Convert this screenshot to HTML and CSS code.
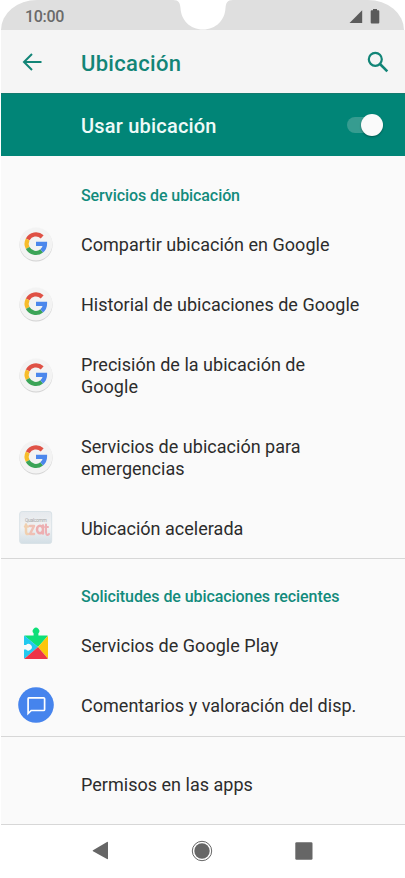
FILE: index.html
```html
<!DOCTYPE html>
<html lang="es">
<head>
<meta charset="utf-8">
<title>Ubicación</title>
<link rel="stylesheet" href="styles.css">
</head>
<body>
<svg width="0" height="0" class="defs">
  <defs>
    <symbol id="google" viewBox="0 0 36 36">
      <circle cx="18" cy="18.900" r="16.500" fill="#d2d2d2"/>
      <circle cx="18" cy="18" r="16.500" fill="#f3f3f3"/>
      <g fill="none" stroke-width="4.200" transform="translate(0 .5)">
        <path d="M24.200 10.400A9.200 9.200 0 0 0 9.700 12.900" stroke="#df5145"/>
        <path d="M9.700 12.900A9.200 9.200 0 0 0 9.700 21.500" stroke="#f7bd2a"/>
        <path d="M9.700 21.500A9.200 9.200 0 0 0 23.700 24.400" stroke="#3ba457"/>
        <path d="M23.700 24.400A9.200 9.200 0 0 0 27 17.300H18" stroke="#4c87ec"/>
      </g>
    </symbol>
  </defs>
</svg>
<div class="phone">
  <header class="status">
    <span class="time">10:00</span>
    <svg class="notch" width="60" height="30" viewBox="0 0 60 30"><path d="M0 0C6 0 7 3 7.500 8C8 20 17 29.500 30 29.500S52 20 52.500 8C53 3 54 0 60 0Z" fill="#fff"/></svg>
    <svg width="32" height="16" viewBox="0 0 32 16" fill="#5b5b5b"><path d="M1.500 15 14.200 2.200V15Z"/><path d="M25 2.300V1h4v1.300h1.300q1 0 1 1V14.500q0 1-1 1h-6.600q-1 0-1-1V3.300q0-1 1-1Z"/></svg>
  </header>
  <div class="appbar">
    <svg width="20" height="18" viewBox="0 0 20 18" fill="none" stroke="#128577" stroke-width="2"><path d="M19.500 9H2M10 1 2 9l8 8"/></svg>
    <h1>Ubicación</h1>
    <svg class="search" width="22" height="22" viewBox="0 0 22 22" fill="none" stroke="#128577"><circle cx="8.300" cy="8.300" r="6.500" stroke-width="2.200"/><path d="M13 13l7.300 7.300" stroke-width="2.600"/></svg>
  </div>
  <div class="switchbar">
    <span>Usar ubicación</span>
    <div class="toggle"><div class="thumb"></div></div>
  </div>
  <main>
    <section class="services">
      <h2>Servicios de ubicación</h2>
      <div class="row"><svg class="icon"><use href="#google"/></svg><p>Compartir ubicación en Google</p></div>
      <div class="row"><svg class="icon"><use href="#google"/></svg><p>Historial de ubicaciones de Google</p></div>
      <div class="row double"><svg class="icon"><use href="#google"/></svg><p>Precisión de la ubicación de<br>Google</p></div>
      <div class="row double"><svg class="icon"><use href="#google"/></svg><p>Servicios de ubicación para<br>emergencias</p></div>
      <div class="row">
        <svg class="icon" viewBox="0 0 36 36">
          <defs><linearGradient id="tile" x2="0" y2="1"><stop offset="0" stop-color="#e5e9ed"/><stop offset=".5" stop-color="#f1f2f3"/><stop offset="1" stop-color="#d2dee5"/></linearGradient></defs>
          <rect x="1.700" y="1.500" width="32" height="32" rx="2.500" fill="url(#tile)" stroke="#d9e2e7"/>
          <text x="7" y="12" class="brand" textLength="22">Qualcomm</text>
          <g fill="none" stroke-width="2.500" stroke-linecap="round" stroke-linejoin="round">
            <path d="M8 14.500v7q0 3 2 2.500M7 16.500h3" stroke="#f0d0b0"/>
            <path d="M12 16h4l-4 8h4" stroke="#efc0b5"/>
            <path d="M25 15.500v8M25 19.500a3 3.700 0 1 0-6 0a3 3.700 0 1 0 6 0" stroke="#edafb1"/>
            <path d="M28 14.500v8q.5 4 3 1.500M27 17h3" stroke="#edafb4" stroke-width="2"/>
          </g>
        </svg>
        <p>Ubicación acelerada</p>
      </div>
    </section>
    <section class="recent">
      <h2>Solicitudes de ubicaciones recientes</h2>
      <div class="row">
        <svg class="icon" viewBox="0 0 36 36">
          <defs><clipPath id="puzzle"><path d="M7 8.500h8.600V6.300a3.300 3.300 0 1 1 4.800 0V8.500H29q1 0 1 1v21.500q0 1-1 1H7q-1 0-1-1v-8.600h2a3.300 3.300 0 1 0 0-4.400H6V9.500q0-1 1-1Z"/></clipPath></defs>
          <g clip-path="url(#puzzle)"><path d="M5-3H31V7.500L20 20 6 8.500Z" fill="#0ddf78"/><path d="M5 7.500 20 20 5 33Z" fill="#22c9ef"/><path d="M31 7.500 20 20 31 33Z" fill="#fcc60b"/><path d="M5 33 20 20 31 33Z" fill="#ed3446"/></g>
        </svg>
        <p>Servicios de Google Play</p>
      </div>
      <div class="row">
        <svg class="icon" viewBox="0 0 36 36"><circle cx="18" cy="18" r="17.800" fill="#4684ed"/><path d="M10.700 10.800H25.600q1 0 1 1V22.500q0 1-1 1H13.200L10.100 26.500V11.800q0-1 .6-1Z" fill="none" stroke="#fff" stroke-width="1.700"/></svg>
        <p>Comentarios y valoración del disp.</p>
      </div>
    </section>
    <section class="permissions"><div class="row"><p>Permisos en las apps</p></div></section>
  </main>
  <nav>
    <svg width="17" height="20" viewBox="0 0 17 20"><path d="M1 9.200 15 1q1-.5 1 .5v16q0 1-1 .5L1 10.200q-.8-.5 0-1Z" fill="#666"/></svg>
    <svg width="22" height="22" viewBox="0 0 22 22"><circle cx="11" cy="11" r="9.700" fill="none" stroke="#666" stroke-width="1"/><circle cx="11" cy="11" r="7.700" fill="#666"/></svg>
    <svg width="18" height="18" viewBox="0 0 18 18"><rect x=".3" y=".3" width="17.200" height="17.400" rx="1.300" fill="#666"/></svg>
  </nav>
</div>
</body>
</html>
```
FILE: styles.css
```css
* { box-sizing: border-box; }
body { margin: 0; background: #fff; font-family: Roboto, sans-serif; color: #2c2c2c; }
h1, h2, p { margin: 0; }
.defs { display: block; height: 0; }
.phone { width: 405px; height: 878px; overflow: hidden; display: flex; flex-direction: column; padding: 0 0 0 1px; }
.status { height: 30px; flex: none; background: #dfdfdf; border-radius: 36px 36px 0 0 / 30px 30px 0 0; display: grid; grid-template-columns: 1fr 60px 1fr; align-items: center; padding: 0 24px 0 24px; margin-right: 1px; }
.status svg:last-child { justify-self: end; }
.notch { align-self: start; }
.time { font-size: 16px; color: #6a6a6a; font-weight: 500; letter-spacing: -0.3px; line-height: 30px; padding-top: 2px; }
.appbar { height: 63px; flex: none; background: #f5f5f5; display: grid; grid-template-columns: 59px 1fr auto; align-items: center; padding: 0 16px 0 21px; }
.appbar h1 { font-size: 22px; font-weight: 500; letter-spacing: 0.3px; color: #128577; line-height: 28px; padding-top: 4px; }
.switchbar { height: 63px; flex: none; background: #018577; color: #eefaf8; display: flex; align-items: center; justify-content: space-between; padding: 0 22px 0 80px; font-size: 20px; font-weight: 500; letter-spacing: 0.2px; border-top: 1px solid #137a6e; }
.switchbar span { padding-top: 1px; }
.toggle { width: 36px; height: 16px; border-radius: 8px; background: #369c90; display: flex; justify-content: flex-end; align-items: center; }
.thumb { width: 22px; height: 22px; flex: none; border-radius: 50%; background: #fafafa; box-shadow: 0 1px 2px #0005; }
main { flex: 1; background: #fafafa; border-bottom: 1px solid #d7d7d7; }
h2 { font-size: 16px; font-weight: 500; letter-spacing: -0.08px; color: #128b7c; padding-left: 80px; line-height: 20px; }
section { border-bottom: 1px solid #d7d7d7; }
.services { height: 403px; padding-top: 30px; }
.services h2 { height: 28px; }
.recent { height: 178px; padding-top: 28px; }
.recent h2 { height: 28px; }
.permissions { border: 0; padding-top: 17px; }
.row { height: 60px; display: grid; grid-template-columns: 63px 1fr; align-items: center; padding-left: 17px; }
.row.double { height: 82px; }
.row p { grid-column: 2; font-size: 18px; letter-spacing: 0.02px; line-height: 21.300px; white-space: nowrap; padding-top: 1px; }
.icon { width: 36px; height: 36px; display: block; }
.brand { font-size: 5px; fill: #aaa; letter-spacing: 0; }
nav { height: 53px; flex: none; display: flex; align-items: center; justify-content: space-between; padding: 0 92px 1px 91px; }
```
